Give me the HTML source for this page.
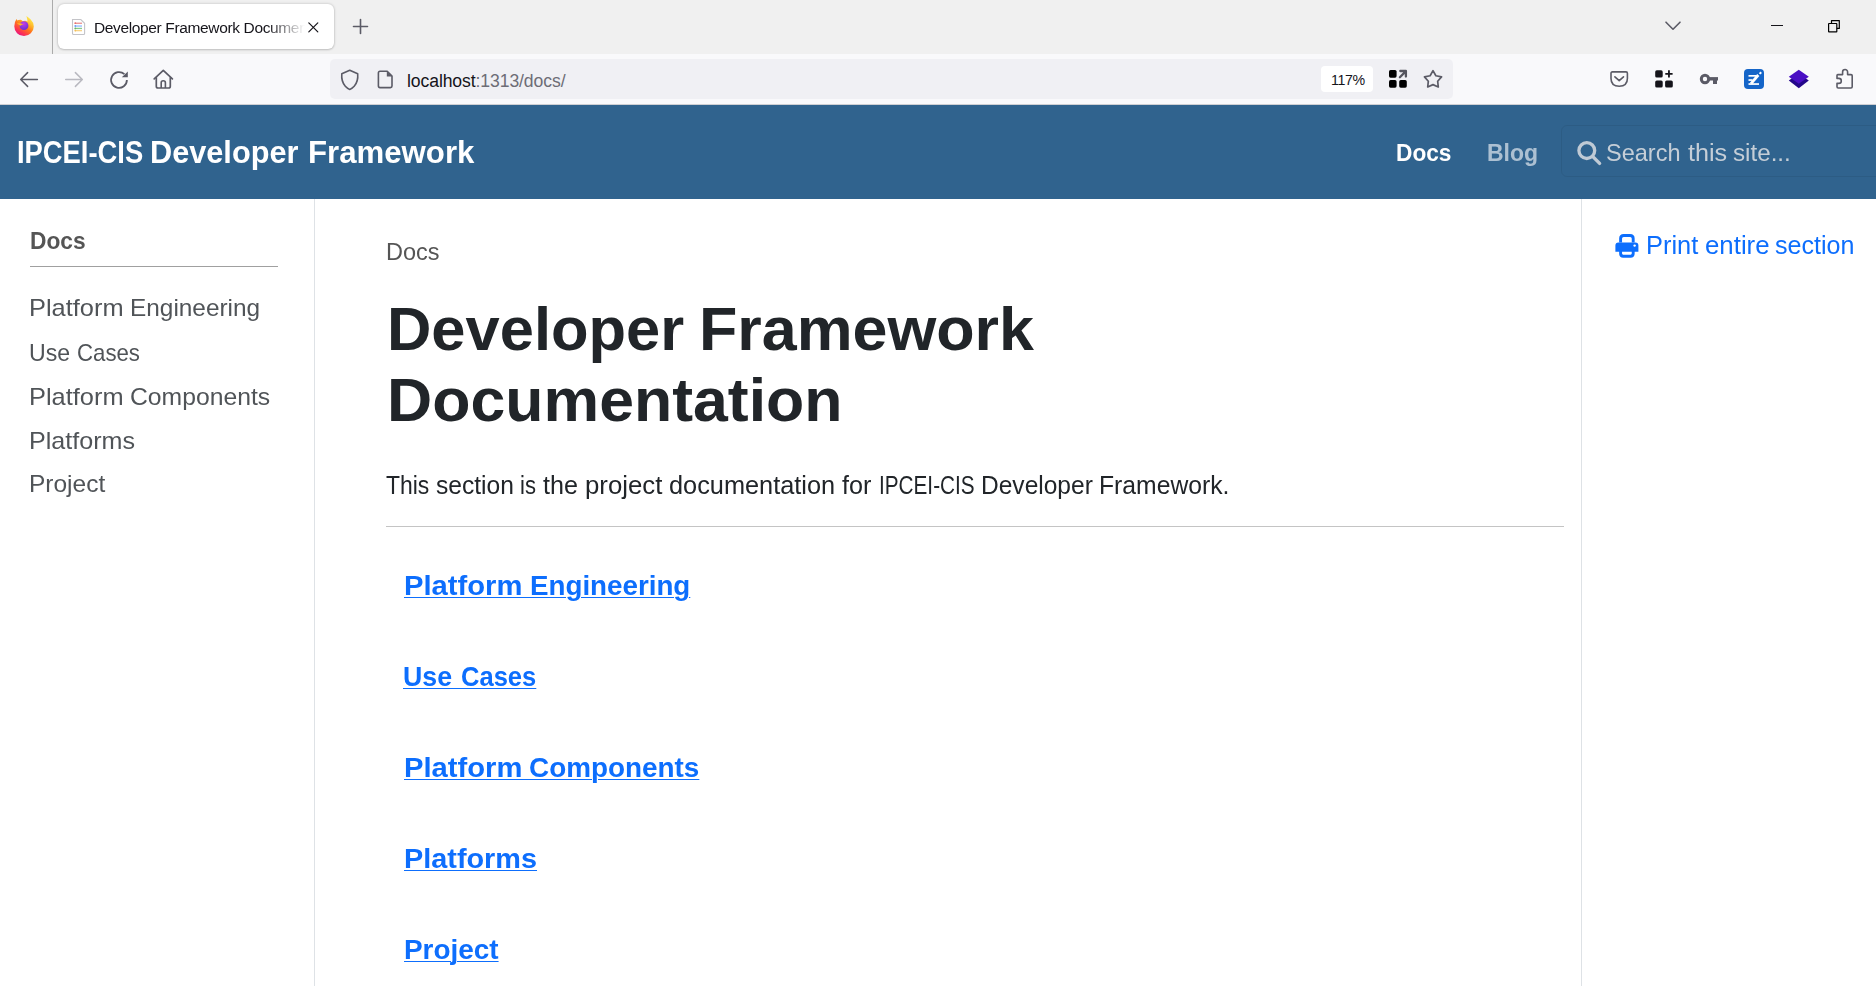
<!DOCTYPE html>
<html><head><meta charset="utf-8">
<style>
*{margin:0;padding:0;box-sizing:border-box}
html,body{width:1876px;height:986px;overflow:hidden;background:#fff;font-family:"Liberation Sans",sans-serif}
.a{position:absolute}
.t{position:absolute;white-space:nowrap;line-height:1;transform-origin:0 0}
svg{position:absolute;overflow:visible}
</style></head><body>
<!-- ===== tab strip ===== -->
<div class="a" style="left:0;top:0;width:1876px;height:54px;background:#f0f0f0"></div>
<svg style="left:0;top:0" width="60" height="54">
 <defs>
  <linearGradient id="ffg" x1="0.85" y1="0.05" x2="0.25" y2="0.95">
   <stop offset="0" stop-color="#fff44f"/><stop offset="0.3" stop-color="#ffbd2e"/><stop offset="0.55" stop-color="#ff7a1a"/><stop offset="0.8" stop-color="#ff3a4a"/><stop offset="1" stop-color="#e8167f"/>
  </linearGradient>
  <radialGradient id="ffp" cx="0.45" cy="0.25" r="0.85">
   <stop offset="0" stop-color="#c43de6"/><stop offset="1" stop-color="#5b2fd3"/>
  </radialGradient>
 </defs>
 <path d="M26.4 15.9 Q29 17.5 30.5 19.3 Q33.8 22.6 33.8 26.5 A9.7 9.7 0 0 1 14.3 26.2 Q14.3 22 16.5 19 L17.6 20.8 Q18.8 19.6 20.6 19.8 Q22 20.2 22.6 21.2 Q25.5 20 27.6 21.6 Q27.2 18.3 26.4 15.9z" fill="url(#ffg)"/>
 <circle cx="24" cy="25.7" r="4.4" fill="url(#ffp)"/>
 <path d="M16.8 23.6 Q19.5 22.8 23.6 24.3 Q21.5 24.6 20.6 25.8 Q18.4 24.6 16.8 23.6z" fill="#ffb52a"/>
 <path d="M17.3 20.4 Q19.5 20 21.8 21.8 Q20 22.3 18.6 22.6z" fill="#ff8f1f"/>
</svg>
<div class="a" style="left:52px;top:0;width:1px;height:54px;background:#9a9a9a;opacity:.8"></div>
<div class="a" style="left:58px;top:4px;width:276px;height:45px;background:#fff;border-radius:6px;box-shadow:0 0 3px rgba(0,0,0,.22),0 1px 2px rgba(0,0,0,.12)"></div>
<svg style="left:71px;top:18.4px" width="15" height="18">
 <path d="M1.5 1.5 h8.3 l3.8 3.8 v10.2 q0 1 -1 1 h-10.1 q-1 0 -1 -1z" fill="#fff" stroke="#c4c4c8" stroke-width="1.1"/>
 <g opacity=".8">
 <rect x="3.8" y="4.6" width="7.2" height="1.3" fill="#e57373"/><circle cx="4.3" cy="5.2" r="0.9" fill="#e05050"/>
 <rect x="3.8" y="7.4" width="7.2" height="1.3" fill="#74a7ff"/><circle cx="4.3" cy="8" r="0.9" fill="#4a86f0"/>
 <rect x="3.8" y="9.8" width="7.2" height="1.3" fill="#6cbf6c"/><circle cx="4.3" cy="10.4" r="0.9" fill="#44a044"/>
 <rect x="3.8" y="12" width="7.2" height="1.3" fill="#f7c96a"/><circle cx="4.3" cy="12.6" r="0.9" fill="#f0b030"/>
 </g>
</svg>
<div class="t" style="left:94px;top:19.7px;font-size:15.5px;color:#15141a;width:211px;overflow:hidden;-webkit-mask-image:linear-gradient(90deg,#000 82%,transparent);letter-spacing:-0.36px">Developer Framework Documentation</div>
<svg style="left:308.3px;top:21.5px" width="11" height="11"><path d="M0.8 0.8 L9.8 9.8 M9.8 0.8 L0.8 9.8" stroke="#15141a" stroke-width="1.2" stroke-linecap="round"/></svg>
<svg style="left:353px;top:19px" width="15" height="15"><path d="M7.5 0.5 V14.5 M0.5 7.5 H14.5" stroke="#5b5b66" stroke-width="1.6" stroke-linecap="round"/></svg>
<svg style="left:1665px;top:21px" width="16" height="10"><path d="M1 1.2 L8 8.2 L15 1.2" fill="none" stroke="#5b5b66" stroke-width="1.6" stroke-linecap="round" stroke-linejoin="round"/></svg>
<div class="a" style="left:1771px;top:24.6px;width:12px;height:1.4px;background:#15141a"></div>
<svg style="left:1827px;top:19px" width="14" height="14"><path d="M4.5 4.3 V1.6 H12.3 V9.4 H9.8" fill="none" stroke="#000" stroke-width="1.2" stroke-linejoin="round"/><rect x="1.6" y="4.5" width="8.2" height="8.3" rx="0.4" fill="none" stroke="#000" stroke-width="1.2"/></svg>

<!-- ===== toolbar ===== -->
<div class="a" style="left:0;top:54px;width:1876px;height:50px;background:#f9f9fb"></div>
<div class="a" style="left:0;top:104px;width:1876px;height:1px;background:#cfcfd3"></div>
<svg style="left:18px;top:70px" width="22" height="20"><path d="M19.4 9.5 H3 M9.6 2.6 L2.7 9.5 L9.6 16.4" fill="none" stroke="#5b5b66" stroke-width="1.5" stroke-linecap="round" stroke-linejoin="round"/></svg>
<svg style="left:63px;top:70px" width="22" height="20"><path d="M2.7 9.5 H19 M12.4 2.6 L19.3 9.5 L12.4 16.4" fill="none" stroke="#b9b9c0" stroke-width="1.5" stroke-linecap="round" stroke-linejoin="round"/></svg>
<svg style="left:108px;top:69px" width="22" height="22">
 <path d="M18.9 11 A7.9 7.9 0 1 1 16.4 5.2" fill="none" stroke="#5b5b66" stroke-width="1.8"/>
 <path d="M13.8 8.2 L19.8 2.4 L19.8 8.2z" fill="#5b5b66"/>
</svg>
<svg style="left:152px;top:68px" width="22" height="22">
 <path d="M2.2 10.8 L11.3 2.3 L20.4 10.8" fill="none" stroke="#5b5b66" stroke-width="1.7" stroke-linecap="round" stroke-linejoin="round"/>
 <path d="M4.3 9.2 V18.2 q0 1.8 1.8 1.8 h10.4 q1.8 0 1.8 -1.8 V9.2" fill="none" stroke="#5b5b66" stroke-width="1.7"/>
 <path d="M9.2 20 V14.8 q0 -2 2 -2 q2.2 0 2.2 2 V20" fill="none" stroke="#5b5b66" stroke-width="1.6"/>
</svg>
<!-- url bar -->
<div class="a" style="left:330px;top:59px;width:1123px;height:40px;background:#f0f0f4;border-radius:5px"></div>
<svg style="left:340px;top:68.5px" width="20" height="22"><path d="M9.75 1.3 L17.7 4.8 Q18.4 12.5 14.2 17.3 Q12 19.8 9.75 20.4 Q7.5 19.8 5.3 17.3 Q1.1 12.5 1.8 4.8z" fill="none" stroke="#5b5b66" stroke-width="1.6" stroke-linejoin="round"/></svg>
<svg style="left:376.6px;top:69.5px" width="18" height="20">
 <path d="M3 1.3 H10.2 L15 6.1 V16 q0 1.6 -1.6 1.6 H3 q-1.6 0 -1.6 -1.6 V2.9 q0 -1.6 1.6 -1.6z" fill="none" stroke="#5b5b66" stroke-width="1.6" stroke-linejoin="round"/>
 <path d="M9.8 1.3 L15 6.5 H9.8z" fill="#5b5b66"/>
</svg>
<div class="t" style="left:407px;top:73px;font-size:17.6px;color:#15141a;letter-spacing:-0.1px">localhost<span style="color:#6d6d76">:1313/docs/</span></div>
<div class="a" style="left:1321px;top:66px;width:52px;height:26px;background:#fff;border-radius:4px"></div>
<div class="t" style="left:1331px;top:73px;font-size:14.2px;letter-spacing:-0.4px;color:#15141a">117%</div>
<svg style="left:1388px;top:69px" width="20" height="20">
 <rect x="1" y="1" width="7.6" height="7.7" rx="1.6" fill="#000"/>
 <rect x="1" y="11.1" width="7.6" height="7.6" rx="1.6" fill="#000"/>
 <rect x="11.2" y="11.1" width="7.6" height="7.6" rx="1.6" fill="#000"/>
 <path d="M11.9 8.2 L17.2 2.9 M12.3 2 H17.9 V7.6" fill="none" stroke="#55555e" stroke-width="2.3" stroke-linecap="round" stroke-linejoin="round"/>
</svg>
<svg style="left:1422px;top:68px" width="22" height="22"><path d="M11.00 2.70 L13.88 7.74 L19.56 8.92 L15.66 13.21 L16.29 18.98 L11.00 16.60 L5.71 18.98 L6.34 13.21 L2.44 8.92 L8.12 7.74z" fill="none" stroke="#5b5b66" stroke-width="1.7" stroke-linejoin="round"/></svg>
<!-- right toolbar icons -->
<svg style="left:1610.6px;top:71px" width="20" height="18">
 <path d="M2.6 0.9 H15 q1.4 0 1.4 1.4 V7.6 q0 7.6 -8.2 7.6 q-8.2 0 -8.2 -7.6 V2.3 q0 -1.4 1.4 -1.4z" fill="none" stroke="#5b5b66" stroke-width="1.6"/>
 <path d="M3.9 5.8 L8.2 9.7 L12.5 5.8" fill="none" stroke="#5b5b66" stroke-width="1.6" stroke-linecap="round" stroke-linejoin="round"/>
</svg>
<svg style="left:1654px;top:69px" width="20" height="20">
 <rect x="1.2" y="1.3" width="7.5" height="7.2" rx="1.6" fill="#15141a"/>
 <rect x="1.2" y="11.4" width="7.5" height="7.2" rx="1.6" fill="#15141a"/>
 <rect x="11.1" y="11.4" width="7.7" height="7.2" rx="1.6" fill="#15141a"/>
 <path d="M14.95 1.3 V8.5 M11.3 4.9 H18.6" stroke="#15141a" stroke-width="1.8"/>
</svg>
<svg style="left:1699px;top:73px" width="21" height="13">
 <circle cx="6" cy="6" r="3.7" fill="none" stroke="#5b5b66" stroke-width="3"/>
 <rect x="9" y="4.1" width="10" height="3.4" fill="#5b5b66"/>
 <rect x="14" y="6" width="4" height="5" fill="#5b5b66"/>
</svg>
<svg style="left:1744px;top:69px" width="20" height="20">
 <rect x="0" y="0" width="20" height="20" rx="4" fill="#1565c8"/>
 <rect x="4.5" y="6" width="8" height="1.7" fill="#fff"/>
 <rect x="4.5" y="10.2" width="4" height="1.7" fill="#fff"/>
 <rect x="4.5" y="14.2" width="10.5" height="1.7" fill="#fff"/>
 <path d="M7 14.6 L14.3 6" stroke="#fff" stroke-width="2.8"/>
 <path d="M15.6 4.9 L17.2 3.2" stroke="#fff" stroke-width="2"/>
</svg>
<svg style="left:1788px;top:69px" width="22" height="21">
 <path d="M0.8 11.5 L10.8 4.5 L20.8 11.5 L10.8 19.3z" fill="#24078a"/>
 <path d="M0.8 7.8 L10.8 0.8 L20.8 7.8 L10.8 14.8z" fill="#4a0fc4"/>
</svg>
<svg style="left:1835px;top:68px" width="20" height="22">
 <path d="M2.8 6.6 H7.6 V4 a2.5 2.5 0 0 1 5 0 V6.6 H16 q1.2 0 1.2 1.2 V18.8 q0 1.2 -1.2 1.2 H3.2 q-1.2 0 -1.2 -1.2 V15.4 H3.8 a2.5 2.5 0 0 0 0 -5 H2 V7.4 q0 -0.8 0.8 -0.8z" fill="none" stroke="#5b5b66" stroke-width="1.6" stroke-linejoin="round"/>
</svg>

<!-- ===== page ===== -->
<div class="a" style="left:0;top:105px;width:1876px;height:94px;background:#30638e"></div>
<div class="a" style="left:1561px;top:125px;width:340px;height:52px;border:1px solid rgba(0,0,0,.065);border-radius:6px"></div>
<svg style="left:1576px;top:139.3px" width="27" height="26"><circle cx="10.8" cy="11.6" r="7.9" fill="none" stroke="#bfcad5" stroke-width="3.3"/><path d="M16.6 17.4 L23.6 24.4" stroke="#bfcad5" stroke-width="3.4" stroke-linecap="round"/></svg>
<div class="a" style="left:314px;top:199px;width:1px;height:787px;background:#dee2e6"></div>
<div class="a" style="left:1581px;top:199px;width:1px;height:787px;background:#dee2e6"></div>
<div class="a" style="left:30px;top:266px;width:248px;height:1px;background:#a0a0a0"></div>
<div class="a" style="left:386px;top:526px;width:1178px;height:1px;background:#c4c4c4"></div>
<svg style="left:1614.5px;top:233.5px" width="24" height="24">
 <path d="M5.6 8.6 V4.6 q0 -3.1 3.1 -3.1 h6.4 q3.1 0 3.1 3.1 V8.6" fill="none" stroke="#0d6efd" stroke-width="2.9"/>
 <path d="M0.4 11.6 q0 -3 3 -3 h17 q3 0 3 3 v6.2 h-23z" fill="#0d6efd"/>
 <path d="M5.6 15 V19.6 q0 2.6 2.6 2.6 h7.4 q2.6 0 2.6 -2.6 V15" fill="none" stroke="#0d6efd" stroke-width="2.9"/>
 <circle cx="19.6" cy="11.6" r="1.2" fill="#fff"/>
</svg>
<!--UNDER-->
<div class="t" style="left:16.8px;top:138px;font-size:30.8px;font-weight:700;transform:scaleX(0.8885);color:#fff;">IPCEI-CIS</div>
<div class="t" style="left:150.4px;top:138px;font-size:30.8px;font-weight:700;transform:scaleX(0.9966);color:#fff;">Developer</div>
<div class="t" style="left:308.2px;top:138px;font-size:30.8px;font-weight:700;transform:scaleX(1.0124);color:#fff;">Framework</div>
<div class="t" style="left:1395.8px;top:141px;font-size:24.4px;font-weight:700;transform:scaleX(0.93);color:#fff;">Docs</div>
<div class="t" style="left:1487px;top:141px;font-size:24.4px;font-weight:700;transform:scaleX(0.9414);color:rgba(255,255,255,.6);">Blog</div>
<div class="t" style="left:1606.2px;top:141px;font-size:24.2px;font-weight:400;transform:scaleX(0.9729);color:#c5ced7;">Search</div>
<div class="t" style="left:1687.6px;top:141px;font-size:24.2px;font-weight:400;transform:scaleX(1.0409);color:#c5ced7;">this</div>
<div class="t" style="left:1732.8px;top:141px;font-size:24.2px;font-weight:400;transform:scaleX(1.0001);color:#c5ced7;">site...</div>
<div class="t" style="left:29.8px;top:230px;font-size:23.4px;font-weight:700;transform:scaleX(0.9729);color:#555;">Docs</div>
<div class="t" style="left:29.2px;top:296px;font-size:24px;font-weight:400;transform:scaleX(1.0581);color:#505458;">Platform</div>
<div class="t" style="left:130px;top:296px;font-size:24px;font-weight:400;transform:scaleX(1.016);color:#505458;">Engineering</div>
<div class="t" style="left:29.2px;top:341px;font-size:24px;font-weight:400;transform:scaleX(0.9628);color:#505458;">Use</div>
<div class="t" style="left:76.8px;top:341px;font-size:24px;font-weight:400;transform:scaleX(0.9255);color:#505458;">Cases</div>
<div class="t" style="left:29.0px;top:385px;font-size:24px;font-weight:400;transform:scaleX(1.0581);color:#505458;">Platform</div>
<div class="t" style="left:130.0px;top:385px;font-size:24px;font-weight:400;transform:scaleX(1.0299);color:#505458;">Components</div>
<div class="t" style="left:29.2px;top:429px;font-size:24px;font-weight:400;transform:scaleX(1.0455);color:#505458;">Platforms</div>
<div class="t" style="left:29.2px;top:472px;font-size:24px;font-weight:400;transform:scaleX(1.0206);color:#505458;">Project</div>
<div class="t" style="left:385.8px;top:240px;font-size:24.4px;font-weight:400;transform:scaleX(0.9625);color:#555;">Docs</div>
<div class="t" style="left:386.6px;top:299px;font-size:60.5px;font-weight:700;transform:scaleX(1.0156);color:#212529;">Developer</div>
<div class="t" style="left:699.4px;top:299px;font-size:60.5px;font-weight:700;transform:scaleX(1.0376);color:#212529;">Framework</div>
<div class="t" style="left:386.6px;top:370px;font-size:60.5px;font-weight:700;transform:scaleX(1.0346);color:#212529;">Documentation</div>
<div class="t" style="left:386.4px;top:473px;font-size:25.1px;font-weight:400;transform:scaleX(0.9133);color:#212529;">This</div>
<div class="t" style="left:435.8px;top:473px;font-size:25.1px;font-weight:400;transform:scaleX(0.9805);color:#212529;">section</div>
<div class="t" style="left:520.0px;top:473px;font-size:25.1px;font-weight:400;transform:scaleX(0.8775);color:#212529;">is</div>
<div class="t" style="left:543.4px;top:473px;font-size:25.1px;font-weight:400;transform:scaleX(1.0005);color:#212529;">the</div>
<div class="t" style="left:584.6px;top:473px;font-size:25.1px;font-weight:400;transform:scaleX(1.0275);color:#212529;">project</div>
<div class="t" style="left:668.6px;top:473px;font-size:25.1px;font-weight:400;transform:scaleX(1.0092);color:#212529;">documentation</div>
<div class="t" style="left:841.8px;top:473px;font-size:25.1px;font-weight:400;transform:scaleX(1.003);color:#212529;">for</div>
<div class="t" style="left:879.0px;top:473px;font-size:25.1px;font-weight:400;transform:scaleX(0.8259);color:#212529;">IPCEI-CIS</div>
<div class="t" style="left:981.2px;top:473px;font-size:25.1px;font-weight:400;transform:scaleX(0.9777);color:#212529;">Developer</div>
<div class="t" style="left:1099.0px;top:473px;font-size:25.1px;font-weight:400;transform:scaleX(0.9845);color:#212529;">Framework.</div>
<div class="t" style="left:403.8px;top:572px;font-size:27.3px;font-weight:700;transform:scaleX(1.0695);color:#0d6efd;text-decoration:underline;text-decoration-thickness:1.3px;text-underline-offset:2px;">Platform</div>
<div class="t" style="left:529.6px;top:572px;font-size:27.3px;font-weight:700;transform:scaleX(1.0162);color:#0d6efd;text-decoration:underline;text-decoration-thickness:1.3px;text-underline-offset:2px;">Engineering</div>
<div class="a" style="left:518.5px;top:597px;width:15.100000000000023px;height:1px;background:#0d6efd"></div>
<div class="t" style="left:403.2px;top:663px;font-size:27.3px;font-weight:700;transform:scaleX(0.979);color:#0d6efd;text-decoration:underline;text-decoration-thickness:1.3px;text-underline-offset:2px;">Use</div>
<div class="t" style="left:460.8px;top:663px;font-size:27.3px;font-weight:700;transform:scaleX(0.936);color:#0d6efd;text-decoration:underline;text-decoration-thickness:1.3px;text-underline-offset:2px;">Cases</div>
<div class="a" style="left:449.8px;top:688px;width:14.0px;height:1px;background:#0d6efd"></div>
<div class="t" style="left:403.8px;top:754px;font-size:27.3px;font-weight:700;transform:scaleX(1.0695);color:#0d6efd;text-decoration:underline;text-decoration-thickness:1.3px;text-underline-offset:2px;">Platform</div>
<div class="t" style="left:529.2px;top:754px;font-size:27.3px;font-weight:700;transform:scaleX(1.0212);color:#0d6efd;text-decoration:underline;text-decoration-thickness:1.3px;text-underline-offset:2px;">Components</div>
<div class="a" style="left:518.5px;top:779px;width:14.200000000000045px;height:1px;background:#0d6efd"></div>
<div class="t" style="left:403.8px;top:845px;font-size:27.3px;font-weight:700;transform:scaleX(1.0565);color:#0d6efd;text-decoration:underline;text-decoration-thickness:1.3px;text-underline-offset:2px;">Platforms</div>
<div class="t" style="left:403.8px;top:936px;font-size:27.3px;font-weight:700;transform:scaleX(1.022);color:#0d6efd;text-decoration:underline;text-decoration-thickness:1.3px;text-underline-offset:2px;">Project</div>
<div class="t" style="left:1646.4px;top:233px;font-size:25.4px;font-weight:400;transform:scaleX(1.0002);color:#0d6efd;">Print</div>
<div class="t" style="left:1705.0px;top:233px;font-size:25.4px;font-weight:400;transform:scaleX(1.0165);color:#0d6efd;">entire</div>
<div class="t" style="left:1775.4px;top:233px;font-size:25.4px;font-weight:400;transform:scaleX(0.9873);color:#0d6efd;">section</div>
</body></html>
